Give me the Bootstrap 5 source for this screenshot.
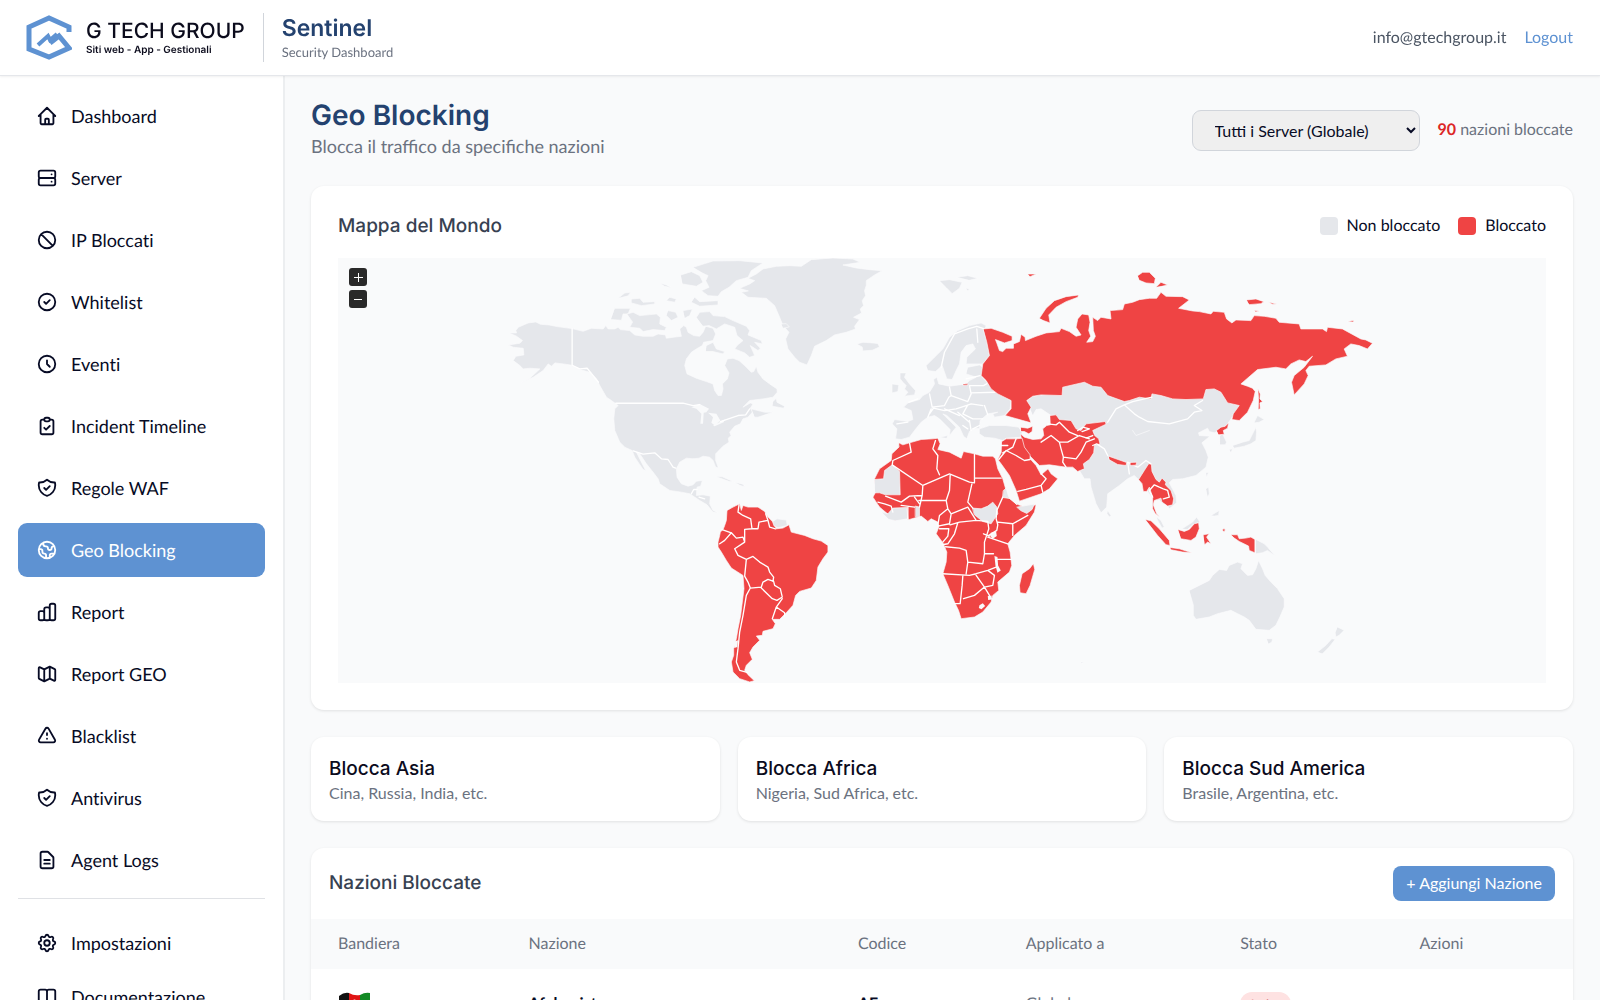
<!DOCTYPE html>
<html lang="it">
<head>
<meta charset="utf-8">
<meta name="viewport" content="width=device-width, initial-scale=1">
<title>Sentinel - Geo Blocking</title>
<link rel="stylesheet" href="https://cdn.jsdelivr.net/npm/bootstrap@5.3.0/dist/css/bootstrap.min.css">
<style>
  :root { --ink:#070b25; --navy:#24426f; --blue:#5e92d2; --muted-ink:#6b7280; --line:#e5e7eb; --page:#f9fafb; --danger-ink:#ef4444; }
  body { font-family: Lato, "Noto Sans", sans-serif; font-size:16px; line-height:24px; color:var(--ink); background:var(--page); font-variant-ligatures:none; text-rendering:geometricPrecision; }
  h1, h2, h3, .brand-font { font-family: Inter, "Open Sans", sans-serif; margin:0; }
  a { text-decoration:none; }
  .app-shell { height:100vh; }
  .topbar { height:76px; padding:0 27px 0 26px; border-bottom:1px solid var(--line); box-shadow:0 1px 2px rgba(0,0,0,.06); z-index:2; }
  .logo-words { margin-left:14px; }
  .logo-name { font-size:21px; line-height:24px; font-weight:500; color:#0b0b1c; }
  .logo-tag { font-size:10px; line-height:12px; font-weight:600; color:#0b0b1c; }
  .top-rule { width:1px; height:49px; margin:0 18px; background:#d1d5db; }
  .product { font-size:23px; line-height:28px; font-weight:600; color:var(--navy); }
  .product-sub { font-size:13px; line-height:20px; color:var(--muted-ink); }
  .blue-link { color:var(--blue); }
  .mail { color:#4b5563; }
  .side { width:285px; flex:none; padding:13px 18px; border-right:2px solid #eceef0; overflow-y:auto; scrollbar-width:none; }
  .side-list { gap:8px; }
  .side-link { height:54px; padding:0 18px; gap:13px; border-radius:9px; color:var(--ink); font-size:18px; }
  .side-link svg { width:22px; height:22px; flex:none; fill:none; stroke:currentColor; stroke-width:2; stroke-linecap:round; stroke-linejoin:round; }
  .side-link.active { background:var(--blue); color:#fff; }
  .side-rule { border-top:1px solid #dfe1e5; margin:11px 0 17px; }
  .content { min-width:0; padding:23px 27px 24px 26px; overflow-y:auto; scrollbar-width:none; }
  .page-head { margin-bottom:25px; }
  .page-title { font-size:28px; line-height:32px; font-weight:600; color:var(--navy); }
  .page-sub { font-size:18px; line-height:30px; color:var(--muted-ink); font-variant-ligatures:normal; }
  .server-pick { width:228px; height:41px; padding:0 18px; border:1px solid #d1d5db; border-radius:9px; background:#efefef; color:var(--ink); }
  .count { color:#dc2626; }
  .soft { color:var(--muted-ink); }
  .panel { background:#fff; border-radius:13px; box-shadow:0 1px 3px rgba(0,0,0,.1); }
  .panel-title { font-size:19px; line-height:26px; font-weight:500; color:#374151; }
  .gap-18 { gap:18px; } .gap-9 { gap:9px; }
  .map-panel { padding:27px; }
  .map-head { margin-bottom:19px; }
  .table-head { padding:18px; }
  .swatch { width:18px; height:18px; border-radius:4px; }
  .sw-off { background:var(--line); } .sw-on { background:var(--danger-ink); }
  .map-box { background:var(--page); }
  .zoomers { top:10px; left:11px; gap:4px; }
  .zoomers button { width:18px; height:18px; border:0; border-radius:3px; background:#292929; color:#fff; padding:0; }
  .zoomers svg, .map-box > svg { display:block; }
  .off { fill:#e5e7eb; stroke:#fafbfc; stroke-width:2; }
  .on { fill:#ef4444; stroke:#fafbfc; stroke-width:2; }
  .sea { fill:#f9fafb; stroke:none; }
  .edge { fill:none; stroke:#fff; stroke-width:4; }
  .regions { gap:18px; margin:27px 0; }
  .region { flex:1 1 0; padding:20px 18px 16px; border:0; text-align:left; color:var(--ink); }
  .region h3 { font-size:19px; line-height:24px; font-weight:500; color:#0b0b1c; }
  .btn-add { background:var(--blue); color:#fff; height:35px; padding:0 13px; border:0; border-radius:8px; }
  .nations { width:100%; table-layout:fixed; }
  .nations th { font-weight:400; color:var(--muted-ink); background:var(--page); height:50px; padding:0 27px; }
  .nations td { height:70px; padding:0 27px; }
  .c1{width:15.1%} .c2{width:26.1%} .c3{width:13.3%} .c4{width:17%} .c5{width:14.2%} .c6{width:14.3%}
  .pill-on { background:#fee2e2; color:#b91c1c; border-radius:12px; padding:0 8px; font-size:13px; line-height:24px; display:inline-block; }
</style>
<script src="https://cdn.jsdelivr.net/npm/bootstrap@5.3.0/dist/js/bootstrap.bundle.min.js"></script>
</head>
<body>
<div class="app-shell d-flex flex-column overflow-hidden">
  <header class="topbar bg-white d-flex align-items-center flex-shrink-0">
    <a href="#" class="d-flex align-items-center text-reset">
      <svg width="46" height="46" viewBox="0 0 46 46" fill="none" stroke="#5e92d2" stroke-width="5" aria-hidden="true"><path d="M43 17V12L23 3 3 12V34L23 42 43 33 33 21 24 28"/><path d="M12 30L22 21 24 25 31 19" stroke-width="4"/></svg>
      <span class="logo-words brand-font d-flex flex-column"><span class="logo-name">G TECH GROUP</span><span class="logo-tag">Siti web - App - Gestionali</span></span>
    </a>
    <span class="top-rule"></span>
    <div><div class="brand-font product">Sentinel</div><div class="product-sub">Security Dashboard</div></div>
    <div class="ms-auto d-flex gap-18"><span class="mail">info@gtechgroup.it</span><a class="blue-link" href="#">Logout</a></div>
  </header>
  <div class="d-flex flex-grow-1 overflow-hidden">
    <nav class="side bg-white" aria-label="Menu">
      <div class="side-list d-flex flex-column">
        <a class="side-link d-flex align-items-center" href="#"><svg viewBox="0 0 24 24"><path d="M3 12l2-2m0 0l7-7 7 7M5 10v10a1 1 0 001 1h3m10-11l2 2m-2-2v10a1 1 0 01-1 1h-3m-6 0a1 1 0 001-1v-4a1 1 0 011-1h2a1 1 0 011 1v4a1 1 0 001 1m-6 0h6"/></svg>Dashboard</a>
        <a class="side-link d-flex align-items-center" href="#"><svg viewBox="0 0 24 24"><path d="M5 12h14M5 12a2 2 0 01-2-2V6a2 2 0 012-2h14a2 2 0 012 2v4a2 2 0 01-2 2M5 12a2 2 0 00-2 2v4a2 2 0 002 2h14a2 2 0 002-2v-4a2 2 0 00-2-2m-2-4h.01M17 16h.01"/></svg>Server</a>
        <a class="side-link d-flex align-items-center" href="#"><svg viewBox="0 0 24 24"><path d="M18.364 18.364A9 9 0 005.636 5.636m12.728 12.728A9 9 0 015.636 5.636m12.728 12.728L5.636 5.636"/></svg>IP Bloccati</a>
        <a class="side-link d-flex align-items-center" href="#"><svg viewBox="0 0 24 24"><path d="M9 12l2 2 4-4m6 2a9 9 0 11-18 0 9 9 0 0118 0z"/></svg>Whitelist</a>
        <a class="side-link d-flex align-items-center" href="#"><svg viewBox="0 0 24 24"><path d="M12 8v4l3 3m6-3a9 9 0 11-18 0 9 9 0 0118 0z"/></svg>Eventi</a>
        <a class="side-link d-flex align-items-center" href="#"><svg viewBox="0 0 24 24"><path d="M9 5H7a2 2 0 00-2 2v12a2 2 0 002 2h10a2 2 0 002-2V7a2 2 0 00-2-2h-2M9 5a2 2 0 002 2h2a2 2 0 002-2M9 5a2 2 0 012-2h2a2 2 0 012 2m-6 9l2 2 4-4"/></svg>Incident Timeline</a>
        <a class="side-link d-flex align-items-center" href="#"><svg viewBox="0 0 24 24"><path d="M9 12l2 2 4-4m5.618-4.016A11.955 11.955 0 0112 2.944a11.955 11.955 0 01-8.618 3.04A12.02 12.02 0 003 9c0 5.591 3.824 10.29 9 11.622 5.176-1.332 9-6.03 9-11.622 0-1.042-.133-2.052-.382-3.016z"/></svg>Regole WAF</a>
        <a class="side-link active d-flex align-items-center" href="#" aria-current="page"><svg viewBox="0 0 24 24"><path d="M3.055 11H5a2 2 0 012 2v1a2 2 0 002 2 2 2 0 012 2v2.945M8 3.935V5.5A2.5 2.5 0 0010.5 8h.5a2 2 0 012 2 2 2 0 104 0 2 2 0 012-2h1.064M15 20.488V18a2 2 0 012-2h3.064M21 12a9 9 0 11-18 0 9 9 0 0118 0z"/></svg>Geo Blocking</a>
        <a class="side-link d-flex align-items-center" href="#"><svg viewBox="0 0 24 24"><path d="M9 19v-6a2 2 0 00-2-2H5a2 2 0 00-2 2v6a2 2 0 002 2h2a2 2 0 002-2zm0 0V9a2 2 0 012-2h2a2 2 0 012 2v10m-6 0a2 2 0 002 2h2a2 2 0 002-2m0 0V5a2 2 0 012-2h2a2 2 0 012 2v14a2 2 0 01-2 2h-2a2 2 0 01-2-2z"/></svg>Report</a>
        <a class="side-link d-flex align-items-center" href="#"><svg viewBox="0 0 24 24"><path d="M9 20l-5.447-2.724A1 1 0 013 16.382V5.618a1 1 0 011.447-.894L9 7m0 13l6-3m-6 3V7m6 10l4.553 2.276A1 1 0 0021 18.382V7.618a1 1 0 00-.553-.894L15 4m0 13V4m0 0L9 7"/></svg>Report GEO</a>
        <a class="side-link d-flex align-items-center" href="#"><svg viewBox="0 0 24 24"><path d="M12 9v2m0 4h.01m-6.938 4h13.856c1.54 0 2.502-1.667 1.732-3L13.732 4c-.77-1.333-2.694-1.333-3.464 0L3.34 16c-.77 1.333.192 3 1.732 3z"/></svg>Blacklist</a>
        <a class="side-link d-flex align-items-center" href="#"><svg viewBox="0 0 24 24"><path d="M9 12l2 2 4-4m5.618-4.016A11.955 11.955 0 0112 2.944a11.955 11.955 0 01-8.618 3.04A12.02 12.02 0 003 9c0 5.591 3.824 10.29 9 11.622 5.176-1.332 9-6.03 9-11.622 0-1.042-.133-2.052-.382-3.016z"/></svg>Antivirus</a>
        <a class="side-link d-flex align-items-center" href="#"><svg viewBox="0 0 24 24"><path d="M9 12h6m-6 4h6m2 5H7a2 2 0 01-2-2V5a2 2 0 012-2h5.586a1 1 0 01.707.293l5.414 5.414a1 1 0 01.293.707V19a2 2 0 01-2 2z"/></svg>Agent Logs</a>
      </div>
      <div class="side-rule"></div>
      <a class="side-link d-flex align-items-center" href="#"><svg viewBox="0 0 24 24"><path d="M10.325 4.317c.426-1.756 2.924-1.756 3.35 0a1.724 1.724 0 002.573 1.066c1.543-.94 3.31.826 2.37 2.37a1.724 1.724 0 001.065 2.572c1.756.426 1.756 2.924 0 3.35a1.724 1.724 0 00-1.066 2.573c.94 1.543-.826 3.31-2.37 2.37a1.724 1.724 0 00-2.572 1.065c-.426 1.756-2.924 1.756-3.35 0a1.724 1.724 0 00-2.573-1.066c-1.543.94-3.31-.826-2.37-2.37a1.724 1.724 0 00-1.065-2.572c-1.756-.426-1.756-2.924 0-3.35a1.724 1.724 0 001.066-2.573c-.94-1.543.826-3.31 2.37-2.37.996.608 2.296.07 2.572-1.065z"/><path d="M15 12a3 3 0 11-6 0 3 3 0 016 0z"/></svg>Impostazioni</a>
      <a class="side-link d-flex align-items-center" href="#"><svg viewBox="0 0 24 24"><path d="M12 6v14M12 6a2 2 0 00-2-2H5a2 2 0 00-2 2v13h6a3 3 0 013 1M12 6a2 2 0 012-2h5a2 2 0 012 2v13h-6a3 3 0 00-3 1"/></svg>Documentazione</a>
    </nav>

    <main class="content flex-grow-1">
      <div class="page-head d-flex align-items-center justify-content-between">
        <div><h1 class="page-title">Geo Blocking</h1><div class="page-sub">Blocca il traffico da specifiche nazioni</div></div>
        <div class="d-flex align-items-center gap-18">
          <select class="server-pick" aria-label="Server"><option>Tutti i Server (Globale)</option></select>
          <span class="soft"><strong class="count">90</strong> nazioni bloccate</span>
        </div>
      </div>

      <section class="panel map-panel">
        <div class="map-head d-flex align-items-center justify-content-between">
          <h2 class="panel-title">Mappa del Mondo</h2>
          <div class="d-flex gap-18">
            <span class="d-flex align-items-center gap-9"><span class="swatch sw-off"></span>Non bloccato</span>
            <span class="d-flex align-items-center gap-9"><span class="swatch sw-on"></span>Bloccato</span>
          </div>
        </div>
        <div class="map-box position-relative">
          <svg width="100%" viewBox="338 259 1209 425" stroke-linejoin="round" stroke-linecap="round" role="img" aria-label="Mappa del mondo">
            <!-- North America, Greenland, Iceland -->
            <g transform="translate(500 250) scale(.33333)">
              <path class="off" d="M28 252L50 252 48 245 55 235 85 222 108 219 122 226 148 228 172 233 217 239 250 247 275 238 310 240 318 230 325 240 345 240 355 235 362 242 390 245 405 258 430 262 460 262 475 255 497 258 500 268 520 265 545 262 540 240 552 230 560 235 565 250 582 260 600 262 610 250 618 232 640 238 648 255 640 275 612 280 608 290 590 300 575 310 560 330 555 350 562 375 590 388 620 398 640 405 645 425 655 440 665 440 670 420 668 405 683 390 688 372 675 350 683 330 700 328 718 335 735 350 755 370 762 368 770 352 775 370 790 390 810 405 832 420 833 430 820 445 790 450 750 455 730 475 752 462 760 465 752 478 760 488 745 505 730 510 722 525 705 532 690 550 694 560 686 568 688 580 670 592 648 615 648 635 656 657 648 655 640 635 630 625 610 622 598 628 580 630 560 628 540 640 530 660 532 685 545 705 565 712 580 708 590 697 608 695 603 712 592 715 590 740 610 738 632 742 630 765 640 785 655 792 640 790 622 768 600 755 570 735 545 730 510 725 480 705 475 690 460 670 440 645 420 615 410 610 425 640 438 665 430 662 415 640 405 625 397 605 375 595 360 580 345 545 342 510 345 480 355 470 335 455 320 445 300 410 290 390 270 370 240 362 217 349 190 345 165 342 155 352 145 345 130 365 100 385 62 402 90 388 120 360 90 358 70 360 60 350 40 335 48 322 72 318 70 298 40 295 26 288 60 283 68 275 50 262Z"/>
              <path class="off" d="M720 118L750 105 765 95 745 88 770 75 790 60 830 52 870 50 905 52 935 32 1000 27 1060 30 1082 40 1030 48 1070 57 1110 62 1148 65 1125 78 1100 95 1100 110 1095 125 1098 140 1088 155 1092 170 1082 180 1086 192 1062 205 1080 212 1065 232 1068 240 1040 250 1005 258 980 275 945 292 935 320 922 348 900 340 885 325 865 300 858 270 868 250 850 230 840 205 825 170 800 148 745 145 725 130 745 126Z"/>
              <path class="off" d="M580 55L640 36 720 35 790 42 755 65 745 85 710 95 688 115 665 128 655 142 625 140 605 125 628 115 618 95 625 80 608 72Z"/>
              <path class="off" d="M543 78L575 68 600 80 610 100 590 112 548 105Z"/>
              <path class="off" d="M345 178L392 178 385 195 370 195 365 214 333 212Z"/>
              <path class="off" d="M382 195L400 190 420 200 450 197 470 195 482 205 480 225 500 235 495 245 460 242 430 248 420 238 390 235 398 220Z"/>
              <path class="off" d="M505 185L528 190 535 205 515 215 500 200ZM550 185L578 180 570 200 555 208ZM585 145L600 158 655 155 655 168 600 172 575 160ZM510 145L530 150 525 160 500 155ZM395 150L420 148 430 160 465 158 465 165 425 170 395 162ZM355 148L375 132 393 130 385 140ZM480 102L500 108 515 116 495 112Z"/>
              <path class="off" d="M590 205L600 190 630 188 640 200 675 203 700 215 740 232 750 245 745 258 785 275 788 285 765 280 782 298 775 305 752 290 765 320 750 325 735 312 705 300 712 290 730 275 712 260 705 235 675 225 650 240 628 230 610 232Z"/>
              <path class="off" d="M620 290L640 280 650 300 675 308 670 315 640 308 618 308ZM845 225L860 224 869 234 850 238Z"/>
              <path class="off" d="M820 458L830 448 832 460 855 472 852 478 818 472ZM755 480L795 490 820 490 775 505 765 505Z"/>
              <path class="off" d="M1072 285L1090 280 1120 282 1135 284 1140 294 1118 304 1090 306 1088 295Z"/>
              <path class="off" d="M648 683L668 684 700 698 690 698ZM705 700L730 706 735 714 722 710Z"/>
              <path class="sea" d="M575 475L600 465 628 480 620 490 612 492 610 525 602 525 605 495 590 480ZM625 492L650 495 662 515 645 530 635 522 640 505ZM640 530L675 512 672 520 645 532Z"/>
              <path class="edge" d="M217 239V349L240 360 262 358 296 400M348 463H550L580 470 600 467M662 518L715 500 738 498 750 480M400 606L430 616 465 612 485 630 505 632 520 655 528 658M575 735L582 722 592 722M598 745L615 750"/>
            </g>
            <!-- Eurasia and Oceania -->
            <g transform="translate(860 250) scale(.33333)">
              <path class="off" d="M502 455L520 442 600 430 610 400 700 400 760 430 1040 415 1065 415 1145 470 1122 500 1105 525 1088 542 1065 552 1050 548 1045 538 1018 552 1020 560 1052 562 1028 582 1040 605 1047 625 1040 655 1010 680 970 690 940 692 930 702 950 740 952 762 930 780 924 770 880 750 845 700 825 680 805 690 780 710 745 735 742 775 725 792 710 765 695 715 692 690 675 690 660 665 650 560 570 530 575 500 545 480 530 482 520 500Z"/>
              <path class="off" d="M820 545L830 560 870 545M1082 560L1090 555 1102 580 1098 588 1082 588Z"/>
              <path class="off" d="M200 350L225 325 250 300 270 265 295 245 330 230 365 222 380 230 375 245 385 280 390 320 370 345 320 345 322 325 348 300 340 285 320 290 305 310 300 345 290 365 278 392 262 390 248 350 228 368 205 365Z"/>
              <path class="off" d="M325 355L360 348 370 355 368 385 410 430 455 455 452 480 435 500 405 505 400 495 415 490 385 495 362 515 360 538 340 540 330 548 322 570 312 562 300 535 262 500 250 495 290 535 270 560 272 542 240 510 225 500 205 505 185 520 165 545 150 565 125 572 108 570 112 540 98 525 105 512 145 518 160 512 155 485 132 475 145 462 180 452 190 440 210 430 225 405 222 392 232 385 238 405 270 412 320 405 330 395 350 385 320 375Z"/>
              <path class="off" d="M122 372L140 372 135 385 150 405 168 425 165 438 135 442 145 430 135 420 140 410 130 400 122 390ZM98 405L118 408 115 428 98 432Z"/>
              <path class="off" d="M360 540L390 530 440 530 478 535 488 550 485 565 440 568 430 575 405 568 375 565 360 555ZM240 95L270 92 308 100 300 118 278 134 262 118ZM292 85L325 80 355 88 330 94ZM318 118L330 120 325 125ZM240 565L265 560 262 568Z"/>
              <path class="edge" d="M245 355L255 310 285 255 325 240 352 232 375 240M352 240L355 280M332 410L372 410 390 400M270 415L275 440 325 458 335 435 330 410M320 390L362 380M335 432L410 430M210 435L218 475 255 470 268 445 275 440M210 495L222 478 255 485 290 480 320 470 335 465M255 480L300 500M295 490L330 520M325 468L310 495 340 510 370 510M375 470L385 498M330 515L335 545M148 460L175 450M112 525L145 520M310 530L325 540M370 470L335 465M340 540L360 530M205 505L215 480"/>
              <path class="on" d="M372 240L395 238 430 250 458 262 458 275 435 282 408 272 412 282 420 305 430 308 440 298 462 298 462 285 480 278 485 256 497 265 498 275 530 262 560 252 600 248 605 238 630 248 650 262 665 258 650 235 655 210 668 195 688 198 692 220 688 245 694 262 682 280 700 278 708 262 702 245 700 205 715 215 725 205 755 210 752 185 790 182 795 165 820 160 840 152 870 148 892 148 905 130 920 142 970 143 990 153 958 178 1000 186 1020 188 1055 195 1062 187 1095 190 1102 210 1118 222 1130 213 1175 215 1185 200 1215 202 1250 208 1260 220 1320 225 1325 240 1390 240 1402 248 1405 235 1450 240 1505 270 1520 273 1540 283 1525 300 1500 290 1475 285 1455 300 1465 322 1430 330 1400 348 1350 352 1340 365 1347 380 1335 405 1305 438 1297 400 1305 380 1335 355 1360 322 1340 338 1320 333 1295 345 1280 360 1250 355 1195 362 1145 405 1165 412 1180 418 1188 428 1182 455 1165 490 1140 515 1118 512 1122 495 1140 470 1105 462 1085 430 1065 420 1040 422 1032 450 980 452 940 450 905 440 878 435 875 450 840 445 810 455 795 458 745 440 725 415 700 412 675 400 610 415 608 440 545 438 520 442 502 455 515 475 505 495 515 522 490 515 437 500 455 480 455 455 415 435 395 420 380 395 365 380 370 345 390 320 382 280Z"/>
              <path class="on" d="M540 208L560 178 585 155 620 143 658 138 655 145 620 158 590 175 568 198 572 222 552 215ZM505 75L530 75 512 83ZM835 80L850 70 870 70 888 88 885 104 860 102 840 94ZM890 115L905 100 925 108ZM1162 153L1190 150 1214 158 1205 164 1170 167ZM1228 160L1252 165 1240 166ZM1185 185L1200 186 1190 189ZM1465 218L1482 215 1484 219ZM1196 420L1203 435 1202 450 1210 458 1202 462 1203 480 1197 482 1198 450ZM310 406L325 404 325 408 312 410ZM1072 545L1085 535 1098 532 1108 522 1105 538 1092 545 1095 556 1078 558Z"/>
              <path class="on" d="M572 500L590 498 600 512 635 515 650 540 665 545 680 525 738 518 740 526 700 545 706 560 718 570 722 585 705 590 703 612 690 632 672 645 675 660 655 668 640 655 620 655 570 648 540 650 525 635 508 618 490 590 483 555 495 565 520 572 545 570 553 560 550 540 562 530 572 528Z"/>
              <path class="on" d="M484 535L505 538 520 532 518 548 508 555 495 548 485 548Z"/>
              <path class="on" d="M427 578L440 570 470 570 488 568 495 595 512 618 512 630 530 650 545 678 566 660 575 675 595 690 570 720 545 735 480 757 470 725 450 680 425 645 415 632 425 612Z"/>
              <path class="on" d="M838 692L855 665 868 645 876 645 878 668 890 692 900 700 908 688 920 700 918 708 935 725 943 750 940 768 925 772 908 760 905 748 885 755 882 768 892 795 902 805 888 795 880 780 880 745 870 715 862 728 852 728 848 705Z"/>
              <path class="sea" d="M885 758L900 752 908 762 900 772Z"/>
              <path class="edge" d="M795 468L820 458 878 445M795 468L825 495 840 505 865 518 930 525 985 510 1005 490 1028 485 1005 470 1030 455M795 468L770 480 745 520M700 590L712 585 735 600 745 620M810 675L805 640 835 655 860 635 875 645M545 580L575 560 600 580 605 600 612 625 610 640 620 655M600 580L625 580 660 560 690 570M612 625L650 630 665 610 680 580 705 570M565 525L590 528 600 520 630 550 655 560M655 545L670 535 690 540 668 548M680 568L700 560M470 570L460 595 430 612M425 590L445 590M418 632L440 605 470 620 495 635 512 632M475 728L500 722 545 710 550 730M545 710L560 690 545 675M880 745L870 725 885 708 900 715 912 720 925 725 930 745 912 750"/>
              <path class="on" d="M748 622L770 630 802 641 800 650 775 647 750 633ZM813 641L832 640 830 649 813 650Z"/>
              <path class="off" d="M745 785L755 800 750 805 743 795ZM892 805L905 815 915 835 908 838 895 815ZM968 840L1000 820 1012 805 1022 820 1000 828 985 842ZM1055 800L1080 785 1078 800 1065 802ZM1040 720L1048 715 1050 735 1045 745ZM1040 672L1048 670 1042 685ZM1185 520L1195 500 1215 512 1200 520 1188 522ZM1120 590L1150 580 1170 575 1180 555 1190 535 1192 550 1190 575 1175 585 1155 592 1125 598ZM1110 602L1120 600 1115 612Z"/>
              <path class="on" d="M858 812L875 816 900 840 930 875 932 890 920 888 895 860ZM932 896L960 900 998 912 970 910 935 903ZM956 842L975 848 990 842 1005 825 1018 822 1020 840 1010 865 995 875 965 870ZM1032 858L1050 855 1042 865 1055 885 1045 880 1036 888ZM1115 858L1135 858 1140 870 1160 868 1175 865 1187 872 1187 912 1170 905 1168 892 1140 878 1125 868Z"/>
              <circle class="on" cx="1094" cy="844" r="4"/>
              <path class="off" d="M1190 872L1215 885 1225 895 1248 922 1225 905 1210 912 1190 915ZM990 1025L1020 1010 1050 995 1060 980 1080 962 1102 965 1110 950 1135 940 1150 945 1145 960 1165 980 1180 978 1190 960 1198 935 1210 960 1218 980 1235 1000 1255 1020 1275 1050 1275 1075 1262 1105 1250 1130 1230 1145 1190 1142 1170 1115 1155 1105 1135 1095 1115 1085 1075 1095 1050 1105 1010 1112 1002 1100 1002 1070ZM1222 1170L1240 1170 1238 1180 1228 1186ZM1435 1135L1455 1145 1440 1160 1430 1165 1428 1152ZM1375 1210L1400 1190 1418 1170 1428 1172 1410 1195 1390 1215Z"/>
              <path class="off" d="M664 1240L675 1241 666 1244Z"/>
            </g>
            <!-- Africa -->
            <g transform="translate(860 420) scale(.33333)">
              <path class="on" d="M118 72L130 78 150 72 185 62 220 60 235 58 242 75 235 92 270 100 305 118 312 98 345 105 370 112 400 112 408 120 415 150 430 180 440 215 445 235 470 255 495 265 530 258 525 280 500 320 465 350 445 375 452 400 457 440 450 460 415 490 418 515 400 530 395 550 370 580 345 595 305 600 297 575 285 550 265 500 250 465 260 430 262 400 250 372 230 345 238 325 235 310 215 300 205 308 185 292 150 302 125 298 105 305 90 290 60 265 50 250 40 235 48 220 45 180 60 150 95 125 97 105 118 85Z"/>
              <path class="on" d="M522 435L526 452 512 500 500 525 482 522 480 500 488 465 510 450Z"/>
              <path class="off" d="M45 182L72 180 75 155 98 138 120 158 122 228 78 228 60 222 46 222ZM66 280L85 285 100 268 142 266 145 300 108 306 88 302ZM168 262L180 265 180 294 168 294ZM340 268L365 270 385 262 400 250 412 265 415 285 395 315 370 308 345 288ZM432 215L440 208 448 235 472 258 455 240 430 236ZM473 265L525 256 518 272 502 284 485 276Z"/>
              <path class="sea" d="M360 560L370 554 377 562 366 572 358 568ZM385 532L396 530 398 542 386 544ZM394 342L410 338 412 352 400 360 392 352ZM405 412L414 415 416 440 424 455 414 462 408 440Z"/>
              <path class="edge" d="M150 72L155 100 100 125 98 138 190 200 270 165 330 190 345 192V105M228 65L220 90 235 110 232 150 240 168M345 178H425M338 192L325 250 340 268M190 200L188 230 150 232 125 250 78 232M188 230L180 265M125 260L165 265M145 265V300M178 245L260 245 270 215 272 170M260 245L265 270 240 290 235 318M265 270L275 285 325 265 350 305 385 308M275 285L270 315 235 322M272 318L300 310 350 305M295 312L285 345 265 375 248 378M258 384L300 388 320 395 325 430 320 465M250 465L330 470 350 465 385 455 410 445M325 430L370 435 375 405 375 370 388 330 385 308M240 330H268L265 352 250 370M375 405L402 405M385 355L445 375M412 275L410 300 415 318 412 335 388 350M415 310L460 315 505 290M460 315V350M412 422L455 422M412 275L430 235M310 472L308 500 302 555 285 555M312 540L345 530 375 505 400 500 405 470 385 455M350 470L375 505 390 530M55 250L75 255 95 262 100 280M165 235L180 255M372 345L390 352"/>
            </g>
            <!-- South America -->
            <g transform="translate(690 490) scale(.33333)">
              <path class="on" d="M100 122L92 130 90 140 85 160 85 175 95 190 110 215 125 238 160 260 163 300 158 340 153 380 145 420 140 450 132 480 132 500 125 520 130 550 150 570 180 580 194 576 175 558 165 545 170 530 188 512 180 492 190 475 210 455 200 442 218 440 220 428 250 420 257 405 248 392 270 392 290 372 310 350 318 320 330 308 365 298 380 275 385 235 400 210 415 190 415 170 395 157 370 150 345 140 305 130 298 108 280 118 260 120 250 100 235 85 225 68 205 55 175 55 160 50 155 65 150 45 130 55 112 65 110 95 105 110Z"/>
              <path class="off" d="M250 98L262 90 290 94 293 110 265 117 254 112Z"/>
              <path class="edge" d="M148 48L145 70 160 80 183 90 187 120 205 120 208 100 235 95 228 75M235 95L240 115 258 120M187 120L165 122 165 160 135 180 145 200 170 212M95 122L125 132 140 148 160 145 165 160M90 165L105 155 125 132M170 212L190 203 210 220 235 235 240 250 252 265 250 278M170 212L165 262 175 280 182 298 215 295 220 280 235 272 252 278 255 290 272 300 278 325 262 335 248 330 215 298M182 298L170 320 160 380 150 430 145 480 140 520 150 545 175 552M278 330L260 355 248 390M260 355L285 372 285 382"/>
              <path class="sea" d="M132 460L145 455 143 475 134 478Z"/>
            </g>
          </svg>
          <div class="zoomers position-absolute d-flex flex-column">
            <button type="button" aria-label="Ingrandisci"><svg width="18" height="18" stroke="#fff"><path d="M5 9.500H14M9.500 5V14"/></svg></button>
            <button type="button" aria-label="Riduci"><svg width="18" height="18" stroke="#fff"><path d="M5 9.500H13"/></svg></button>
          </div>
        </div>
      </section>

      <div class="regions d-flex">
        <button type="button" class="panel region"><h3>Blocca Asia</h3><span class="soft">Cina, Russia, India, etc.</span></button>
        <button type="button" class="panel region"><h3>Blocca Africa</h3><span class="soft">Nigeria, Sud Africa, etc.</span></button>
        <button type="button" class="panel region"><h3>Blocca Sud America</h3><span class="soft">Brasile, Argentina, etc.</span></button>
      </div>

      <section class="panel overflow-hidden">
        <div class="table-head d-flex align-items-center justify-content-between">
          <h2 class="panel-title">Nazioni Bloccate</h2>
          <button type="button" class="btn-add">+ Aggiungi Nazione</button>
        </div>
        <table class="nations">
          <thead><tr><th class="c1">Bandiera</th><th class="c2">Nazione</th><th class="c3">Codice</th><th class="c4">Applicato a</th><th class="c5">Stato</th><th class="c6">Azioni</th></tr></thead>
          <tbody><tr>
            <td><svg width="33" height="24" viewBox="0 0 33 24" role="img" aria-label="Afghanistan"><path d="M1 4Q6 0 11 1V20Q6 19 1 22Z" fill="#111"/><path d="M11 1Q16 4 22 3V22Q16 23 11 20Z" fill="#e01414"/><path d="M22 3Q27 0 32 1V20Q27 19 22 22Z" fill="#128a24"/><circle cx="16.500" cy="12" r="4" fill="none" stroke="#fff"/></svg></td>
            <td><strong>Afghanistan</strong></td><td><strong>AF</strong></td><td class="soft">Globale</td><td><span class="pill-on">Attivo</span></td><td></td>
          </tr></tbody>
        </table>
      </section>
    </main>
  </div>
</div>
</body>
</html>
